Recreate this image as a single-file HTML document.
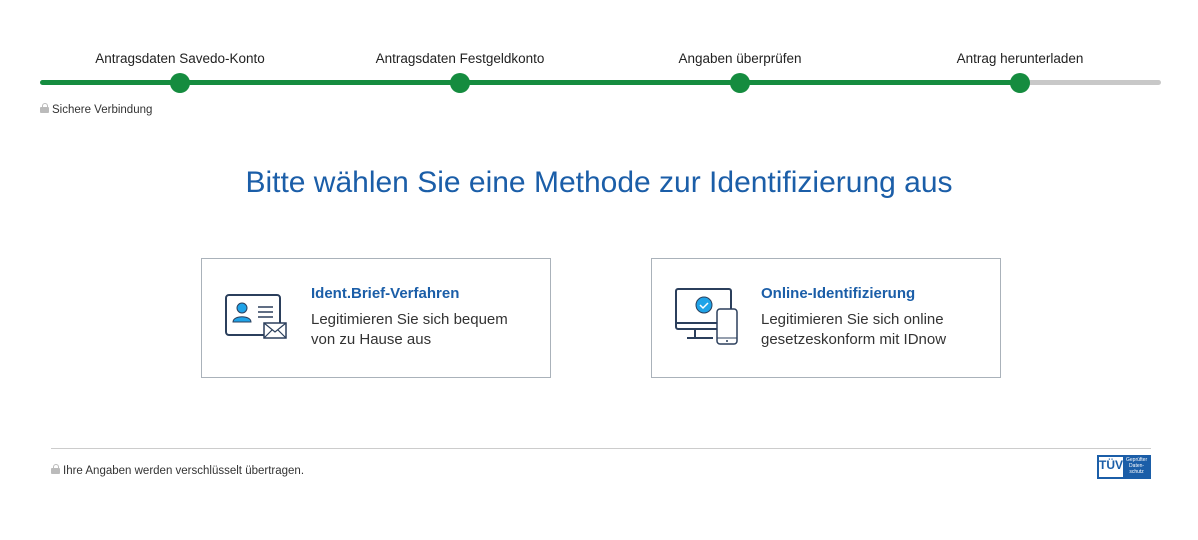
<!DOCTYPE html><html><head><meta charset="utf-8"><style>
body{margin:0;width:1198px;height:540px;background:#fff;font-family:"Liberation Sans",sans-serif;position:relative;overflow:hidden}
.a{position:absolute}
.lbl{top:51px;font-size:13.5px;color:#222;transform:translateX(-50%);white-space:nowrap}
.dot{top:73px;width:20px;height:20px;border-radius:50%;background:#158c3f;margin-left:-10px}
.card{top:258px;width:348px;height:118px;border:1px solid #aab2ba;}
.card h3{position:absolute;left:109px;top:26px;margin:0;font-size:15px;color:#1b5ea8;font-weight:bold}
.card p{position:absolute;left:109px;top:51px;margin:0;font-size:15px;line-height:20px;color:#333}
.lock{display:inline-block;position:relative;width:9px;height:6px;background:#bbb;border-radius:1px;margin-right:3px}
.lock:before{content:"";position:absolute;left:1.5px;top:-4px;width:4px;height:5px;border:1.5px solid #bbb;border-bottom:none;border-radius:3px 3px 0 0}
</style></head><body>
<div class="a" style="left:40px;top:80px;width:980px;height:5px;background:#158c3f;border-radius:3px"></div>
<div class="a" style="left:1020px;top:80px;width:141px;height:5px;background:#c8c8c8;border-radius:3px"></div>
<div class="a dot" style="left:180px"></div><div class="a dot" style="left:460px"></div><div class="a dot" style="left:740px"></div><div class="a dot" style="left:1020px"></div>
<div class="a lbl" style="left:180px">Antragsdaten Savedo-Konto</div>
<div class="a lbl" style="left:460px">Antragsdaten Festgeldkonto</div>
<div class="a lbl" style="left:740px">Angaben überprüfen</div>
<div class="a lbl" style="left:1020px">Antrag herunterladen</div>
<div class="a" style="left:40px;top:104px;font-size:11.5px;color:#333"><span class="lock"></span>Sichere Verbindung</div>
<div class="a" style="left:0;width:1198px;top:166px;text-align:center;font-size:30px;color:#1b5ea8">Bitte wählen Sie eine Methode zur Identifizierung aus</div>
<div class="a card" style="left:201px">
<svg class="a" style="left:23px;top:35px" width="64" height="48" viewBox="0 0 64 48"><rect x="1" y="1" width="54" height="40" rx="3" fill="#fff" stroke="#2b3f5c" stroke-width="2"/><circle cx="17" cy="14" r="5" fill="#1fa3e8" stroke="#2b3f5c"/><path d="M8 28c0-7 18-7 18 0z" fill="#1fa3e8" stroke="#2b3f5c"/><path d="M33 13h15M33 18h15M33 23h15" stroke="#2b3f5c" stroke-width="1.5"/><rect x="39" y="29" width="22" height="15" fill="#fff" stroke="#2b3f5c" stroke-width="1.5"/><path d="M39 29l11 9 11-9M39 44l8-8M61 44l-8-8" fill="none" stroke="#2b3f5c" stroke-width="1.2"/></svg>
<h3>Ident.Brief-Verfahren</h3><p>Legitimieren Sie sich bequem<br>von zu Hause aus</p></div>
<div class="a card" style="left:651px">
<svg class="a" style="left:23px;top:29px" width="64" height="58" viewBox="0 0 64 58"><rect x="1" y="1" width="55" height="40" rx="2" fill="#fff" stroke="#2b3f5c" stroke-width="2"/><path d="M1 35h55M20 41v8M12 50h26" stroke="#2b3f5c" stroke-width="2"/><circle cx="29" cy="17" r="8" fill="#1fa3e8" stroke="#2b3f5c"/><path d="M25 17l3 3 5-5" stroke="#fff" stroke-width="1.5" fill="none"/><rect x="42" y="21" width="20" height="35" rx="3" fill="#fff" stroke="#2b3f5c" stroke-width="1.5"/><path d="M42 50h20" stroke="#2b3f5c"/><circle cx="52" cy="53" r="1" fill="#2b3f5c"/></svg>
<h3>Online-Identifizierung</h3><p>Legitimieren Sie sich online<br>gesetzeskonform mit IDnow</p></div>
<div class="a" style="left:51px;top:448px;width:1100px;height:1px;background:#ccc"></div>
<div class="a" style="left:51px;top:465px;font-size:11.5px;color:#333"><span class="lock"></span>Ihre Angaben werden verschlüsselt übertragen.</div>
<div class="a" style="left:1097px;top:455px;width:54px;height:24px;background:#1b5ea8"><div class="a" style="left:2px;top:2px;width:24px;height:20px;background:#fff;color:#1b5ea8;font-size:12px;font-weight:bold;text-align:center;line-height:16px">TÜV</div><div class="a" style="left:29px;top:2px;font-size:5px;color:#fff;line-height:6px;text-align:center">Geprüfter<br>Daten-<br>schutz</div></div>
</body></html>
